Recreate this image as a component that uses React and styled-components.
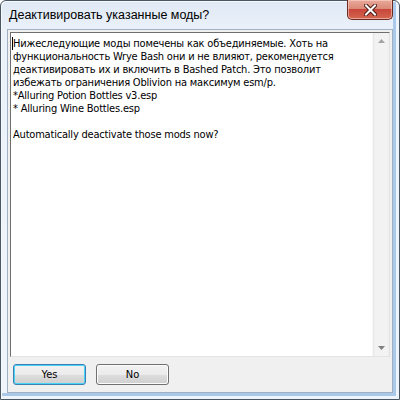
import React from 'react'
import styled, { createGlobalStyle } from 'styled-components'

const Global = createGlobalStyle`
    html, body {
        margin: 0;
        padding: 0;
        background: #ffffff;
        overflow: hidden;
    }
`

const Window = styled.div`
    width: 400px;
    height: 400px;
    box-sizing: border-box;
    display: flex;
    flex-direction: column;
    padding: 0 6px 6px 6px;
    border: 1px solid #4b5663;
    border-radius: 6px 6px 0 0;
    background: linear-gradient(to bottom, #dfe9f5 0px, #ebf1f9 30px, #f0f5fb 100%);
    box-shadow: inset 1px 1px 0 #f6f9fd, inset -3px -3px 0 #eef4fb, inset -6px -6px 0 #a9c8ea;
    font-family: "Liberation Sans", Arial, sans-serif;
`

const TitleBar = styled.div`
    height: 28px;
    display: flex;
    align-items: flex-start;
    flex-shrink: 0;
`

const Title = styled.div`
    margin-top: 7px;
    padding-left: 2px;
    font-family: "Segoe UI", "Liberation Sans", sans-serif;
    font-size: 12.5px;
    line-height: 15px;
    color: #000;
`

const CloseButton = styled.div`
    margin-left: auto;
    margin-top: -1px;
    width: 46px;
    height: 20px;
    box-sizing: border-box;
    border: 1px solid #6b2a22;
    border-top: none;
    border-radius: 0 0 5px 5px;
    background: linear-gradient(to bottom, #e9a99b 0%, #dc8a78 45%, #c8463a 50%, #d46650 100%);
    box-shadow: inset 0 0 0 1px rgba(255, 220, 210, 0.55);
    display: flex;
    align-items: center;
    justify-content: center;
`

const Client = styled.div`
    flex: 1;
    display: flex;
    flex-direction: column;
    padding: 2px;
    background: #f0f0f0;
    border: 1px solid #9fb0c2;
    min-height: 0;
`

const TextBox = styled.div`
    flex: 1;
    display: flex;
    background: #fff;
    border: 1px solid #e3e3e3;
    border-top-color: #6e6e6e;
    border-left-color: #6e6e6e;
    min-height: 0;
`

const Content = styled.div`
    flex: 1;
    position: relative;
    padding: 4px 2px;
    font-family: "DejaVu Sans Condensed", "DejaVu Sans", sans-serif;
    font-stretch: condensed;
    font-size: 11px;
    letter-spacing: -0.2px;
    line-height: 13px;
    color: #000;
    white-space: pre;
`

const Caret = styled.span`
    position: absolute;
    left: 1px;
    top: 4px;
    width: 1px;
    height: 13px;
    background: #000;
`

const ScrollBar = styled.div`
    width: 17px;
    display: flex;
    flex-direction: column;
    justify-content: space-between;
    align-items: center;
    background: linear-gradient(to right, #e6e6e6 0px, #f2f2f2 2px, #f3f3f3 14px, #ebebeb 17px);
    border-left: 1px solid #f7f7f7;
    box-sizing: border-box;
    padding: 6px 0;
`

const Arrow = styled.svg`
    width: 7px;
    height: 4px;
    transform: ${p => (p.$down ? 'rotate(180deg)' : 'none')};
`

const ButtonRow = styled.div`
    display: flex;
    gap: 10px;
    padding: 7px 3px 5px 3px;
    flex-shrink: 0;
`

const Button = styled.button`
    width: 73px;
    height: 21px;
    box-sizing: border-box;
    padding: 0;
    border-radius: 3px;
    border: 1px solid ${p => (p.$default ? '#3c7fb1' : '#707070')};
    background: linear-gradient(to bottom, #f2f2f2 0%, #ebebeb 50%, #dddddd 51%, #cfcfcf 100%);
    box-shadow: ${p => (p.$default ? 'inset 0 0 0 1px #48d4f8' : 'inset 0 0 0 1px #fcfcfc')};
    font-family: "DejaVu Sans Condensed", "DejaVu Sans", sans-serif;
    font-stretch: condensed;
    font-size: 11px;
    color: #000;
`

const lines = [
    'Нижеследующие моды помечены как объединяемые. Хоть на',
    'функциональность Wrye Bash они и не влияют, рекомендуется',
    'деактивировать их и включить в Bashed Patch. Это позволит',
    'избежать ограничения Oblivion на максимум esm/p.',
    '*Alluring Potion Bottles v3.esp',
    '* Alluring Wine Bottles.esp',
    '',
    'Automatically deactivate those mods now?',
]

function App() {
    return (
        <>
            <Global />
            <Window>
                <TitleBar>
                    <Title>Деактивировать указанные моды?</Title>
                    <CloseButton>
                        <svg width="13" height="12" viewBox="0 0 13 12">
                            <path d="M2 1.5 L11 10.5 M11 1.5 L2 10.5" stroke="#4a1a14" strokeWidth="4" strokeLinecap="square" />
                            <path d="M2 1.5 L11 10.5 M11 1.5 L2 10.5" stroke="#ffffff" strokeWidth="2" strokeLinecap="square" />
                        </svg>
                    </CloseButton>
                </TitleBar>
                <Client>
                    <TextBox>
                        <Content>
                            <Caret />
                            {lines.join('\n')}
                        </Content>
                        <ScrollBar>
                            <Arrow viewBox="0 0 7 4">
                                <path d="M0 4 L3.5 0 L7 4 Z" fill="#a3a3a3" />
                            </Arrow>
                            <Arrow viewBox="0 0 7 4" $down>
                                <path d="M0 4 L3.5 0 L7 4 Z" fill="#7f7f7f" />
                            </Arrow>
                        </ScrollBar>
                    </TextBox>
                    <ButtonRow>
                        <Button $default>Yes</Button>
                        <Button>No</Button>
                    </ButtonRow>
                </Client>
            </Window>
        </>
    )
}

export default App
